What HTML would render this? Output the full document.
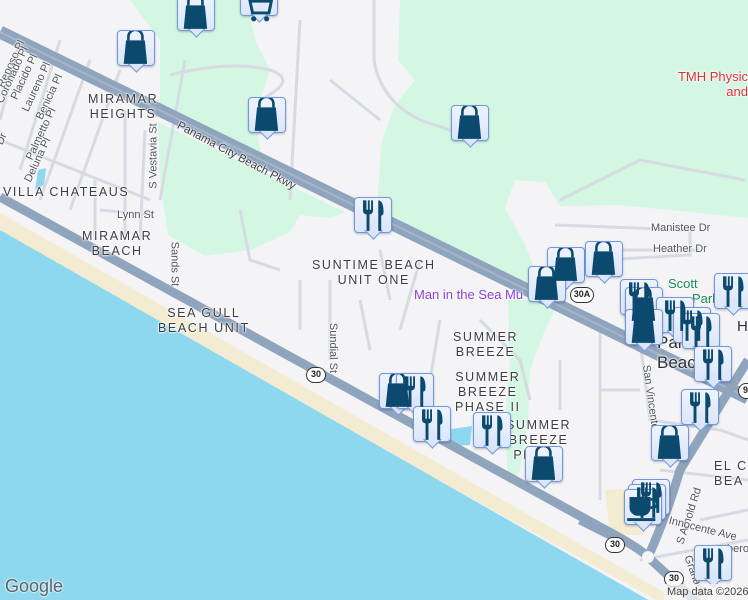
<!DOCTYPE html>
<html><head><meta charset="utf-8"><style>
*{margin:0;padding:0;box-sizing:border-box}
html,body{width:748px;height:600px;overflow:hidden}
body{background:#f4f3f5;font-family:"Liberation Sans",sans-serif;position:relative}
svg.map{position:absolute;left:0;top:0}
.l{position:absolute;white-space:nowrap;color:#3c4043;text-shadow:0 0 2px #fff,0 0 2px #fff,0 0 2px #fff}
.a{font-size:12.5px;letter-spacing:1.6px;text-align:center;line-height:15px;color:#3a3d42}
.s{font-size:11px;color:#50555c}
.m{position:absolute;width:38px;height:36px;background:linear-gradient(#eef3fd,#dbe6fa);border:1px solid #7197dc;border-radius:4px;box-shadow:0 1px 2px rgba(0,0,0,.25)}
.m:after{content:"";position:absolute;left:12px;top:26px;width:12px;height:12px;background:#dbe6fa;border-right:1px solid #7197dc;border-bottom:1px solid #7197dc;transform:rotate(45deg)}
.m svg{position:absolute;left:1px;top:0px;z-index:1;width:34px;height:34px}
.sh{position:absolute;width:20px;height:16px;border:1.5px solid #333;border-radius:8px;background:#fff;font-size:9px;font-weight:bold;text-align:center;line-height:13px;color:#222}
</style></head><body>
<svg class="map" width="748" height="600" viewBox="0 0 748 600">
<polygon fill="#d3f7e3" points="130,0 748,0 748,218 690,212 620,205 560,206 545,182 515,180 505,208 525,245 548,300 300,183 160,110 160,40"/>
<polygon fill="#d3f7e3" points="158,122 345,212 330,218 300,215 290,232 250,250 205,256 168,235 160,180"/>
<polygon fill="#d3f7e3" points="508,300 560,300 545,330 530,370 528,420 520,470 508,485 505,420 510,360"/>
<polygon fill="#f4f3f5" points="247,0 400,0 398,60 415,80 395,105 382,140 376,214 262,158 255,120 262,95 270,70 255,40"/>
<polygon fill="#f4ecd2" points="0,213 748,640 748,650 0,240"/>
<polygon fill="#f4ecd2" points="605,490 640,488 645,535 610,535"/>
<polygon fill="#8dd8ee" points="0,230 680,618 0,620"/>
<polygon fill="#8dd8ee" points="445,430 472,426 470,445 448,446"/>
<polygon fill="#8dd8ee" points="38,170 46,168 44,185 35,190"/>
<g stroke="#d6dbe2" stroke-width="3" fill="none">
<path d="M0 140 L150 200 M20 40 L0 120 M60 40 L20 170 M90 60 L40 200 M120 70 L70 210 M185 60 L160 200 M100 210 L150 215 M95 240 L95 180 M125 240 L125 110 M140 240 L145 130"/>
<path d="M170 75 Q230 60 270 70 Q300 80 260 100 M300 20 L290 200 M330 80 L380 120 M374 0 L374 60 Q380 100 420 120 L480 140 M560 200 L640 160 L745 180 M555 225 L690 230 L690 255 L600 260 M560 250 L700 250 M380 250 L390 300 M420 260 L400 330 M300 280 L300 330 M330 280 L330 360 M360 300 L370 350 M440 320 L430 380 M480 320 L520 360 L530 400 M560 360 L560 410 M600 330 L600 500 M640 340 L650 420 L720 430 L748 440 M660 470 L748 480 M600 390 L640 390 M640 560 L748 540 M700 520 L748 510 M240 210 L250 260 L280 270"/>
</g>
<path d="M0 32 L748 398" stroke="#8fa4bd" stroke-width="13" fill="none"/>
<path d="M0 32 L748 398" stroke="#a6b6c9" stroke-width="2" fill="none"/>
<g stroke="#8fa4bd" stroke-width="9" fill="none">
<path d="M0 197 L600 527 Q640 548 648 557 L700 605"/>
<path d="M648 557 Q665 520 680 470 L748 360"/>
<path d="M580 520 L620 540"/>
</g>
<circle cx="648" cy="557" r="6" fill="#f4f3f5"/>
</svg>

<div class="l a" style="left:88px;top:92px">MIRAMAR<br>HEIGHTS</div>
<div class="l a" style="left:3px;top:185px">VILLA CHATEAUS</div>
<div class="l a" style="left:82px;top:229px">MIRAMAR<br>BEACH</div>
<div class="l a" style="left:158px;top:306px">SEA GULL<br>BEACH UNIT</div>
<div class="l a" style="left:312px;top:258px">SUNTIME BEACH<br>UNIT ONE</div>
<div class="l a" style="left:453px;top:330px">SUMMER<br>BREEZE</div>
<div class="l a" style="left:455px;top:370px">SUMMER<br>BREEZE<br>PHASE II</div>
<div class="l a" style="left:506px;top:418px">SUMMER<br>BREEZE<br>PHASE</div>
<div class="l a" style="left:714px;top:459px;text-align:left">EL CE<br>BEA</div>
<div class="l" style="left:414px;top:287px;font-size:13px;color:#8a3ee0">Man in the Sea Mu</div>
<div class="l" style="left:668px;top:69px;font-size:13px;color:#e0303d;text-align:right;line-height:15px;width:80px;overflow:hidden">TMH Physic<br>and</div>
<div class="l" style="left:668px;top:276px;font-size:13px;color:#188a55">Scott</div>
<div class="l" style="left:692px;top:291px;font-size:13px;color:#188a55">Park</div>
<div class="l" style="left:657px;top:333px;font-size:17px;color:#2d3034;line-height:20px">Panama<br>Beach</div>
<div class="l" style="left:737px;top:318px;font-size:15px;color:#2d3034">H</div>

<div class="l s" style="left:170px;top:150px;font-size:11.5px;transform:rotate(28deg);color:#3c4043">Panama City Beach Pkwy</div>
<div class="l s" style="left:117px;top:209px">Lynn St</div>
<div class="l s" style="left:121px;top:150px;transform:rotate(-90deg)">S Vestavia St</div>
<div class="l s" style="left:152px;top:258px;transform:rotate(90deg)">Sands St</div>
<div class="l s" style="left:308px;top:342px;transform:rotate(90deg)">Sundial St</div>
<div class="l s" style="left:612px;top:398px;transform:rotate(82deg)">San Vincente St</div>
<div class="l s" style="left:660px;top:510px;transform:rotate(-72deg)">S Arnold Rd</div>
<div class="l s" style="left:668px;top:523px;transform:rotate(14deg)">Innocente Ave</div>
<div class="l s" style="left:673px;top:570px;transform:rotate(70deg)">Granada</div>
<div class="l s" style="left:651px;top:222px">Manistee Dr</div>
<div class="l s" style="left:653px;top:243px">Heather Dr</div>
<div class="l s" style="left:727px;top:543px">bero</div>
<div class="l s" style="left:-14px;top:58px;transform:rotate(-65deg)">Reposo Pl</div>
<div class="l s" style="left:-18px;top:69px;transform:rotate(-65deg)">Coronado Pl</div>
<div class="l s" style="left:0px;top:71px;transform:rotate(-65deg)">Placido Pl</div>
<div class="l s" style="left:10px;top:81px;transform:rotate(-65deg)">Laureno Pl</div>
<div class="l s" style="left:25px;top:91px;transform:rotate(-65deg)">Benicia Pl</div>
<div class="l s" style="left:13px;top:128px;transform:rotate(-65deg)">Palmetto Pl</div>
<div class="l s" style="left:14px;top:154px;transform:rotate(-65deg)">Deluna Pl</div>
<div class="l s" style="left:-4px;top:133px;transform:rotate(-65deg)">Dr</div>

<div class="sh" style="left:306px;top:367px">30</div>
<div class="sh" style="left:605px;top:537px">30</div>
<div class="sh" style="left:664px;top:571px">30</div>
<div class="sh" style="left:570px;top:287px;width:24px">30A</div>
<div class="sh" style="left:738px;top:383px">98</div>

<svg width="0" height="0" style="position:absolute"><defs>
<g id="bag"><path d="M10 11 V8 a6 6 0 0 1 12 0 V11" stroke="#0b4a6e" stroke-width="2.2" fill="none"/><path d="M8 11 H24 L26 31 H6 Z" fill="#0b4a6e"/></g>
<g id="food"><path d="M8 5 v9 a3 3 0 0 0 3 3 v14 h2.5 v-14 a3 3 0 0 0 3-3 v-9 h-1.6 v8 h-1.2 v-8 h-1.6 v8 h-1.2 v-8 z" fill="#0b4a6e"/><path d="M21 5 c3.5 0 4.5 5 4.5 10 c0 2 -1 3 -2 3 v13 h-2.5 z" fill="#0b4a6e"/></g>
<g id="cart"><path d="M4 6 h4 l3 14 h14 l2 -10 h-17" stroke="#0b4a6e" stroke-width="2.5" fill="none"/><circle cx="12" cy="25" r="2.2" fill="#0b4a6e"/><circle cx="23" cy="25" r="2.2" fill="#0b4a6e"/></g>
<g id="cup"><path d="M5 9 h18 v9 a7 7 0 0 1 -7 7 h-4 a7 7 0 0 1 -7 -7 z" fill="#0b4a6e"/><path d="M23 11 h2 a3.5 3.5 0 0 1 0 7 h-2" stroke="#0b4a6e" stroke-width="2.2" fill="none"/><rect x="3" y="27" width="24" height="2.5" fill="#0b4a6e"/></g>
</defs></svg>

<div class="m" style="left:177px;top:-5px"><svg viewBox="3 3 27 29"><use href="#bag"/></svg></div>
<div class="m" style="left:240px;top:-20px"><svg viewBox="3 3 27 29" style="top:12px"><use href="#cart"/></svg></div>
<div class="m" style="left:117px;top:30px"><svg viewBox="3 3 27 29"><use href="#bag"/></svg></div>
<div class="m" style="left:248px;top:97px"><svg viewBox="3 3 27 29"><use href="#bag"/></svg></div>
<div class="m" style="left:451px;top:105px"><svg viewBox="3 3 27 29"><use href="#bag"/></svg></div>
<div class="m" style="left:354px;top:197px"><svg viewBox="3 3 27 29"><use href="#food"/></svg></div>
<div class="m" style="left:547px;top:247px"><svg viewBox="3 3 27 29"><use href="#bag"/></svg></div>
<div class="m" style="left:585px;top:241px"><svg viewBox="3 3 27 29"><use href="#bag"/></svg></div>
<div class="m" style="left:528px;top:266px"><svg viewBox="3 3 27 29"><use href="#bag"/></svg></div>
<div class="m" style="left:620px;top:279px"><svg viewBox="3 3 27 29"><use href="#food"/></svg></div>
<div class="m" style="left:625px;top:287px"><svg viewBox="3 3 27 29"><use href="#bag"/></svg></div>
<div class="m" style="left:656px;top:297px"><svg viewBox="3 3 27 29"><use href="#food"/></svg></div>
<div class="m" style="left:673px;top:307px"><svg viewBox="3 3 27 29"><use href="#food"/></svg></div>
<div class="m" style="left:682px;top:313px"><svg viewBox="3 3 27 29"><use href="#food"/></svg></div>
<div class="m" style="left:625px;top:309px"><svg viewBox="3 3 27 29"><use href="#bag"/></svg></div>
<div class="m" style="left:714px;top:273px"><svg viewBox="3 3 27 29"><use href="#food"/></svg></div>
<div class="m" style="left:694px;top:346px"><svg viewBox="3 3 27 29"><use href="#food"/></svg></div>
<div class="m" style="left:681px;top:389px"><svg viewBox="3 3 27 29"><use href="#food"/></svg></div>
<div class="m" style="left:651px;top:425px"><svg viewBox="3 3 27 29"><use href="#bag"/></svg></div>
<div class="m" style="left:632px;top:479px"><svg viewBox="3 3 27 29"><use href="#food"/></svg></div>
<div class="m" style="left:628px;top:484px"><svg viewBox="3 3 27 29"><use href="#food"/></svg></div>
<div class="m" style="left:624px;top:489px"><svg viewBox="3 3 27 29"><use href="#cup"/></svg></div>
<div class="m" style="left:694px;top:545px"><svg viewBox="3 3 27 29"><use href="#food"/></svg></div>
<div class="m" style="left:379px;top:373px"><svg viewBox="3 3 27 29"><use href="#bag"/></svg></div>
<div class="m" style="left:396px;top:373px"><svg viewBox="3 3 27 29"><use href="#food"/></svg></div>
<div class="m" style="left:413px;top:406px"><svg viewBox="3 3 27 29"><use href="#food"/></svg></div>
<div class="m" style="left:473px;top:412px"><svg viewBox="3 3 27 29"><use href="#food"/></svg></div>
<div class="m" style="left:525px;top:446px"><svg viewBox="3 3 27 29"><use href="#bag"/></svg></div>

<div class="l" style="left:5px;top:576px;font-size:18px;color:#5f6368;text-shadow:0 0 2px #fff,0 0 2px #fff">Google</div>
<div style="position:absolute;left:664px;top:584px;width:84px;height:16px;background:rgba(245,245,245,.8);font-size:11px;color:#444;padding:2px 0 0 3px;white-space:nowrap;overflow:hidden;font-family:'Liberation Sans',sans-serif">Map data ©2026</div>
</body></html>
